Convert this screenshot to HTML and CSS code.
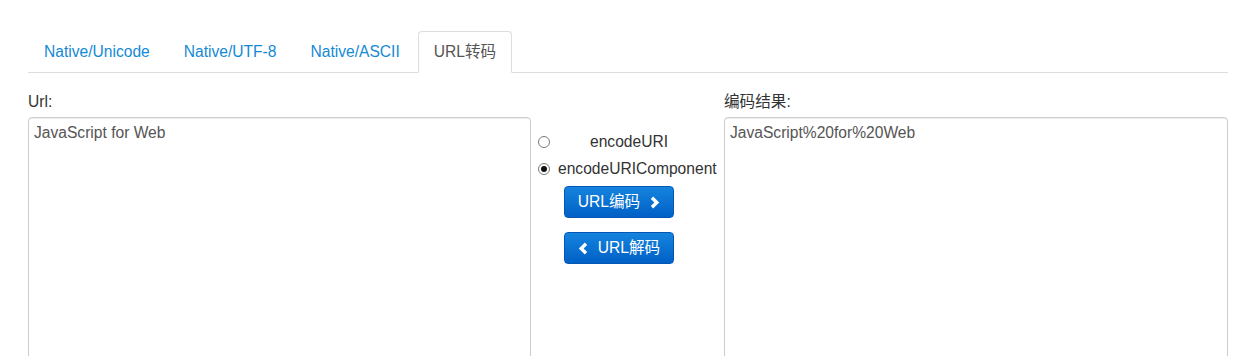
FILE: index.html
```html
<!DOCTYPE html>
<html lang="zh">
<head>
<meta charset="utf-8">
<title>URL转码</title>
<link rel="stylesheet" href="styles.css">
</head>
<body>
<div class="page">
  <ul class="tabs">
    <li class="tab"><a href="#">Native/Unicode</a></li>
    <li class="tab"><a href="#">Native/UTF-8</a></li>
    <li class="tab"><a href="#">Native/ASCII</a></li>
    <li class="tab active"><a href="#">URL转码</a></li>
  </ul>
  <div class="panel">
    <div class="col">
      <label class="label">Url:</label>
      <textarea class="box">JavaScript for Web</textarea>
    </div>
    <div class="mid">
      <label class="radio-row">
        <input type="radio" name="m" class="radio">
        <span class="opt opt-short">encodeURI</span>
      </label>
      <label class="radio-row">
        <input type="radio" name="m" class="radio" checked>
        <span class="opt">encodeURIComponent</span>
      </label>
      <button class="btn">URL编码
        <svg class="chev" width="11" height="13" viewBox="0 0 11 13"><polyline points="3,1.8 7.8,6.5 3,11.2" fill="none" stroke="#fff" stroke-width="3.4"/></svg>
      </button>
      <button class="btn">
        <svg class="chev" width="11" height="13" viewBox="0 0 11 13"><polyline points="8,1.8 3.2,6.5 8,11.2" fill="none" stroke="#fff" stroke-width="3.4"/></svg>
        URL解码</button>
    </div>
    <div class="col">
      <label class="label">编码结果:</label>
      <textarea class="box">JavaScript%20for%20Web</textarea>
    </div>
  </div>
</div>
</body>
</html>
```
FILE: styles.css
```css
html, body {
  margin: 0;
  padding: 0;
  background: #fff;
}
body {
  font-family: "Liberation Sans", Arial, "Noto Sans CJK SC", sans-serif;
  font-size: 15.6px;
  line-height: 20px;
  color: #333;
  overflow: hidden;
}
.page {
  padding: 31px 0 0 28px;
  width: 1200px;
}
.tabs {
  list-style: none;
  margin: 0;
  padding: 0;
  display: flex;
  border-bottom: 1px solid #ddd;
}
.tab {
  margin-bottom: -1px;
}
.tab a {
  display: block;
  padding: 10px 15px;
  line-height: 20px;
  margin-right: 2px;
  border: 1px solid transparent;
  border-radius: 4px 4px 0 0;
  color: #158ad4;
  text-decoration: none;
}
.tab.active a {
  color: #555;
  background: #fff;
  border-color: #ddd #ddd transparent #ddd;
}
.panel {
  display: grid;
  grid-template-columns: 503px 193px 504px;
  margin-top: 19px;
}
.col {
  display: flex;
  flex-direction: column;
}
.label {
  display: block;
  line-height: 20px;
  margin-bottom: 5px;
  color: #333;
}
.box {
  box-sizing: border-box;
  width: 100%;
  height: 300px;
  margin: 0;
  padding: 5px 5px;
  border: 1px solid #ccc;
  border-radius: 4px;
  box-shadow: inset 0 1px 1px rgba(0,0,0,0.075);
  font-family: "Liberation Sans", Arial, sans-serif;
  font-size: 15.6px;
  line-height: 20px;
  color: #555;
  resize: none;
  outline: none;
}
.mid {
  display: flex;
  flex-direction: column;
  padding-top: 40px;
}
.radio-row {
  display: flex;
  align-items: center;
  height: 20px;
  margin-bottom: 7px;
  color: #333;
}
.radio {
  appearance: none;
  -webkit-appearance: none;
  box-sizing: border-box;
  width: 12px;
  height: 12px;
  margin: 0 0 0 7px;
  border: 1px solid #7a7a7a;
  border-radius: 50%;
  background: #fff;
  position: relative;
}
.radio:checked::after {
  content: "";
  position: absolute;
  left: 2px;
  top: 2px;
  width: 6px;
  height: 6px;
  border-radius: 50%;
  background: #111;
}
.opt {
  margin-left: 8px;
  white-space: nowrap;
}
.opt-short {
  margin-left: 40px;
}
.btn {
  box-sizing: border-box;
  width: 110px;
  height: 32px;
  margin: 0 0 14px 33px;
  padding: 0;
  display: flex;
  align-items: center;
  justify-content: center;
  gap: 9px;
  border: 1px solid #0257b5;
  border-radius: 4px;
  background: linear-gradient(to bottom, #1584de 0%, #0060c6 100%);
  color: #fff;
  font-family: "Liberation Sans", Arial, "Noto Sans CJK SC", sans-serif;
  font-size: 15.6px;
  line-height: 20px;
  cursor: pointer;
}
.chev {
  display: block;
  flex: none;
}
```
